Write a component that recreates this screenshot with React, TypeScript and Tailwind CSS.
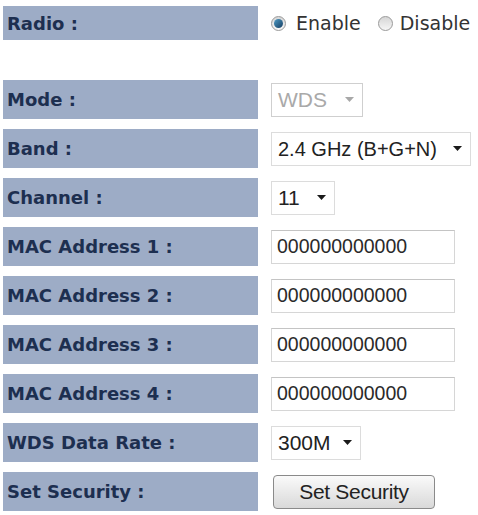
const labelFont = { fontFamily: '"DejaVu Sans", Verdana, sans-serif' }
const fieldFont = { fontFamily: '"Liberation Sans", Arial, sans-serif' }

function Label({ children }: { children: React.ReactNode }) {
  return (
    <div
      style={labelFont}
      className="flex h-[39px] w-[255px] shrink-0 items-center bg-[#9dacc6] pl-1 text-[18px] font-bold text-[#1d2f50]"
    >
      {children}
    </div>
  )
}

function Caret({ muted }: { muted?: boolean }) {
  return (
    <svg width="9" height="5" viewBox="0 0 9 5" className="shrink-0">
      <path d="M0 0h9L4.5 5z" fill={muted ? '#a8a8a8' : '#1a1a1a'} />
    </svg>
  )
}

function Select({
  value,
  width,
  size,
  muted,
}: {
  value: string
  width: string
  size: string
  muted?: boolean
}) {
  return (
    <div
      style={fieldFont}
      className={`flex h-[34px] ${width} ${size} items-center justify-between border pl-[6px] pr-[8px] ${
        muted ? 'border-[#cfcfcf] text-[#a9a9a9]' : 'border-[#dcdcdc] text-[#222]'
      }`}
    >
      <span>{value}</span>
      <Caret muted={muted} />
    </div>
  )
}

function TextBox({ value }: { value: string }) {
  return (
    <div
      style={fieldFont}
      className="flex h-[34px] w-[184px] items-center border border-[#d6d6d6] border-t-[#c4c4c4] pl-[5px] text-[19.5px] text-[#2a2a2a]"
    >
      {value}
    </div>
  )
}

function Radio({ checked }: { checked?: boolean }) {
  return (
    <span className="flex h-[15px] w-[15px] shrink-0 items-center justify-center rounded-full border border-[#9a9a9a] bg-gradient-to-b from-[#d6d6d6] to-[#f6f6f6]">
      {checked && <span className="h-[9px] w-[9px] rounded-full bg-gradient-to-br from-[#4f9cc6] to-[#173f63]" />}
    </span>
  )
}

function Row({ label, children }: { label: string; children: React.ReactNode }) {
  return (
    <div className="flex items-center gap-[13px]">
      <Label>{label}</Label>
      {children}
    </div>
  )
}

const macs = ['MAC Address 1 :', 'MAC Address 2 :', 'MAC Address 3 :', 'MAC Address 4 :']

export default function App() {
  return (
    <div className="h-[515px] w-[478px] overflow-hidden bg-white pl-[3px] pt-[6px]">
      {/* radio on/off */}
      <div className="flex items-center gap-[13px]">
        <div
          style={labelFont}
          className="flex h-[34px] w-[255px] shrink-0 items-center bg-[#9dacc6] pl-1 text-[18px] font-bold text-[#1d2f50]"
        >
          Radio :
        </div>
        <div style={labelFont} className="flex items-center text-[19px] text-[#333]">
          <Radio checked />
          <span className="ml-[10px]">Enable</span>
          <span className="ml-[17px]">
            <Radio />
          </span>
          <span className="ml-[7px]">Disable</span>
        </div>
      </div>

      <div className="mt-[40px] flex flex-col gap-[10px]">
        <Row label="Mode :">
          <Select value="WDS" width="w-[92px]" size="text-[21px]" muted />
        </Row>
        <Row label="Band :">
          <Select value="2.4 GHz (B+G+N)" width="w-[200px]" size="text-[20px]" />
        </Row>
        <Row label="Channel :">
          <Select value="11" width="w-[64px]" size="text-[21px]" />
        </Row>
        {macs.map((m) => (
          <Row key={m} label={m}>
            <TextBox value="000000000000" />
          </Row>
        ))}
        <Row label="WDS Data Rate :">
          <Select value="300M" width="w-[90px]" size="text-[21px]" />
        </Row>
        <Row label="Set Security :">
          <button
            style={fieldFont}
            className="ml-[2px] h-[34px] w-[162px] rounded-[4px] border border-[#8a8a8a] bg-gradient-to-b from-[#fafafa] to-[#d9d9d9] text-[21px] tracking-[-0.3px] text-[#222]"
          >
            Set Security
          </button>
        </Row>
      </div>
    </div>
  )
}
